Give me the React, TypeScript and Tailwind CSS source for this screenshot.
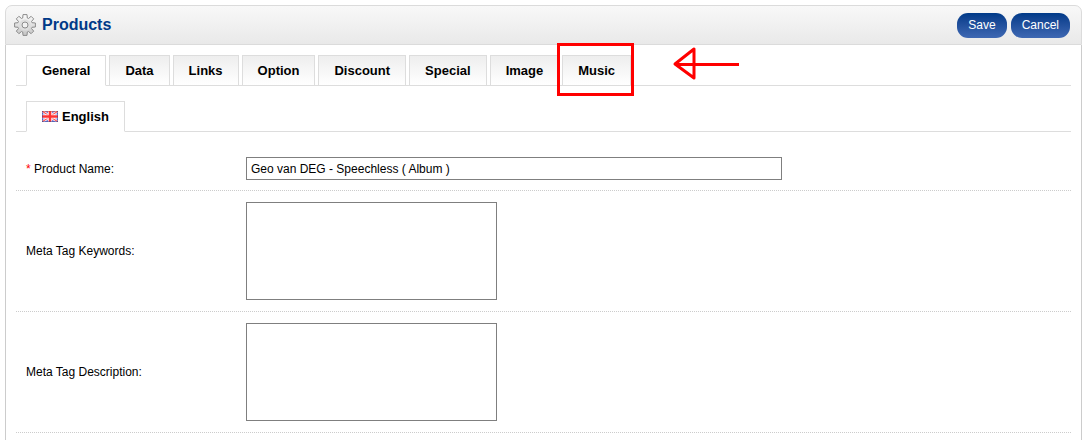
const tabs = ["General", "Data", "Links", "Option", "Discount", "Special", "Image", "Music"];

function GearIcon() {
  return (
    <svg className="size-[22px] shrink-0" viewBox="0 0 22 22" aria-hidden="true">
      <defs>
        <linearGradient id="gear" x1="0" y1="0" x2="0" y2="1">
          <stop offset="0" stopColor="#fcfcfc" />
          <stop offset="1" stopColor="#c4c4c4" />
        </linearGradient>
      </defs>
      <g stroke="#8c8c8c" strokeLinejoin="round">
        <path
          fill="url(#gear)"
          d="M9 .6h4l.3 3.4 1.2.5 2.6-2.2 2.6 2.6-2.2 2.6.5 1.200 3.400.3v4l-3.400.3-.5 1.200 2.200 2.600-2.600 2.600-2.600-2.200-1.200.5-.3 3.400H9l-.3-3.400-1.200-.5-2.600 2.200-2.600-2.600 2.200-2.600-.5-1.200L.6 13V9l3.400-.3.5-1.200-2.200-2.600 2.600-2.600 2.600 2.200L8.700 4z"
        />
        <circle cx="11" cy="11" r="4.6" fill="none" stroke="#dedede" strokeWidth="2" />
        <circle cx="11" cy="11" r="3" fill="#f1f1f1" />
      </g>
    </svg>
  );
}

function FlagIcon() {
  return (
    <svg className="h-[11px] w-4 shrink-0" viewBox="0 0 16 11" aria-hidden="true">
      <rect width="16" height="11" fill="#8089dc" />
      <path d="M0 0l16 11M16 0L0 11" stroke="#fff" strokeWidth="2.600" />
      <path d="M0 0l16 11M16 0L0 11" stroke="#f55" strokeWidth="1.200" />
      <path d="M8 0v11M0 5.500h16" stroke="#fff" strokeWidth="4" />
      <path d="M8 0v11M0 5.500h16" stroke="#ff3333" strokeWidth="2.600" />
      <path d="M0 .5h16" stroke="#c0392b" strokeOpacity=".5" />
      <path d="M0 10.500h16M.5 0v11M15.500 0v11" stroke="#2c3c94" strokeOpacity=".5" />
    </svg>
  );
}

// Red frame and arrow pointing at the tab it is placed in
function Callout() {
  return (
    <span className="pointer-events-none absolute -left-1.5 -top-[13px] h-[53px] w-[77px] border-[3px] border-[#ff0000]">
      <svg className="absolute left-[112px] top-0 h-9 w-[68px]" viewBox="0 0 68 36" fill="none" stroke="#ff0000" strokeWidth="3">
        <path d="M67 18.500H3M3 18L22 3v29z" strokeLinejoin="round" />
      </svg>
    </span>
  );
}

export default function App() {
  return (
    <div className="flex min-h-screen flex-col bg-white pl-[5px] pr-[6px] pt-[5px] font-['Liberation_Sans',Arial,sans-serif] text-xs text-black">
      <header className="flex h-10 items-center rounded-t-[7px] border border-[#dbdbdb] bg-linear-to-b from-[#f8f8f8] to-[#e9e9e9] pl-2 pr-[11px]">
        <GearIcon />
        <h1 className="ml-1.5 text-base font-bold text-[#003a88]">Products</h1>
        <div className="ml-auto flex gap-1">
          <button type="button" className="h-[25px] rounded-[11px] bg-linear-to-b from-[#003a88] to-[#3e68b3] px-[11px] text-white">
            Save
          </button>
          <button type="button" className="h-[25px] rounded-[11px] bg-linear-to-b from-[#003a88] to-[#3e68b3] px-[11px] text-white">
            Cancel
          </button>
        </div>
      </header>

      <main className="grow border-x border-[#cccccc] px-2.5 pt-2.5">
        <nav className="mb-[15px] flex gap-[3px] border-b border-[#dddddd] pl-2.5">
          {tabs.map((tab, i) => (
            <a
              key={tab}
              href="#"
              className={
                i === 0
                  ? "relative -mb-px h-[31px] border border-[#dddddd] border-b-white bg-white px-[15px] text-[13px] leading-[30px] font-bold"
                  : "relative -mb-px h-[31px] border border-[#dddddd] bg-linear-to-b from-[#eeeeee] to-white px-[15px] text-[13px] leading-[30px] font-bold"
              }
            >
              {tab}
              {tab === "Music" && <Callout />}
            </a>
          ))}
        </nav>

        <nav className="mb-[15px] flex border-b border-[#dddddd] pl-2.5">
          <a
            href="#"
            className="-mb-px flex h-[31px] items-center gap-1 border border-[#dddddd] border-b-white bg-white px-[15px] text-[13px] leading-[30px] font-bold"
          >
            <FlagIcon />
            English
          </a>
        </nav>

        <form>
          <div className="flex items-center border-b border-dotted border-[#cccccc] px-2.5 py-2.5">
            <label htmlFor="name" className="w-[220px] shrink-0">
              <span className="text-[#ff0000]">*</span> Product Name:
            </label>
            <input
              id="name"
              type="text"
              defaultValue="Geo van DEG - Speechless ( Album )"
              className="h-[23px] w-[536px] border border-[#7f7f7f] bg-white px-1"
            />
          </div>
          <div className="flex items-center border-b border-dotted border-[#cccccc] px-2.5 py-[11px]">
            <label htmlFor="keywords" className="w-[220px] shrink-0">
              Meta Tag Keywords:
            </label>
            <textarea id="keywords" className="h-[98px] w-[251px] resize-none border border-[#7f7f7f] bg-white p-1" />
          </div>
          <div className="flex items-center border-b border-dotted border-[#cccccc] px-2.5 py-[11px]">
            <label htmlFor="description" className="w-[220px] shrink-0">
              Meta Tag Description:
            </label>
            <textarea id="description" className="h-[98px] w-[251px] resize-none border border-[#7f7f7f] bg-white p-1" />
          </div>
        </form>
      </main>
    </div>
  );
}
